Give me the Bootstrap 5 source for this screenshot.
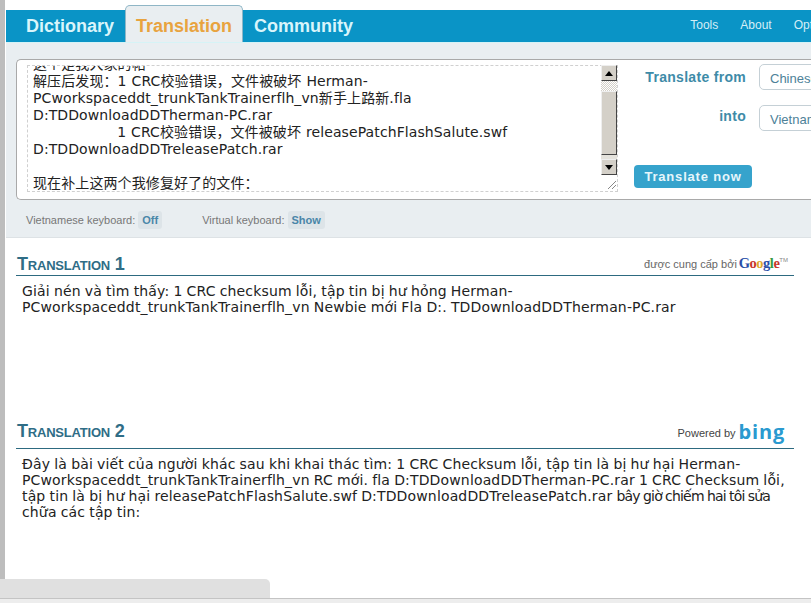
<!DOCTYPE html>
<html lang="en">
<head>
  <meta charset="UTF-8" />
  <meta name="viewport" content="width=device-width, initial-scale=1.0"/>
  <title>Translation</title>
  <link href="https://cdn.jsdelivr.net/npm/bootstrap@5.3.0/dist/css/bootstrap.min.css" rel="stylesheet"/>
  <style>
    html, body { height: 603px; overflow: hidden; }
    body { background: #fff; font-family: "Liberation Sans", Arial, sans-serif; width: 811px; }
    .shell { height: 579px; border-left: 5px solid #bdbdbd; padding: 10px 0 0 1px; width: 811px; }
    .topbar { height: 32px; background: #0a94c6; padding-left: 20px; }
    .tab-link { font-size: 18px; font-weight: 700; color: #d9f5fb; text-decoration: none; line-height: 31px; }
    .tab-first { margin-right: 11px; }
    .tab-active { height: 37px; width: 118px; margin-right: 11px; background: #e9eef1; color: #e8a33f; border: 1px solid #8fb6c6; border-bottom: 0; border-radius: 5px 5px 0 0; text-align: center; line-height: 41px; }
    .side-link { font-size: 12px; color: #d5eef6; text-decoration: none; margin-left: 22px; line-height: 34px; }
    .side-links { margin-right: -24px; }
    .tool-area { height: 196px; background: #e9eef1; border-top: 1px solid #d5f3f6; border-bottom: 1px solid #dde2e5; padding: 16px 0 0 10px; overflow: hidden; }
    .input-panel { height: 141px; width: 820px; background: #fff; border: 1px solid #a9a9a9; border-right: 0; border-radius: 5px 0 0 5px; padding: 5px 0 0 10px; }
    .text-box { width: 591px; height: 127px; border: 1px dashed #d0d0d0; flex: none; }
    .text-scroll { width: 574px; padding-left: 5px; overflow: hidden; font: 14px/17px "DejaVu Sans", Verdana, "Noto Sans CJK SC", sans-serif; letter-spacing: .1px; word-spacing: .4px; color: #222; }
    .text-inner { margin-top: -10px; white-space: pre-wrap; }
    .fake-scroll { width: 16px; flex: none; margin-top: -1px; }
    .sb-btn { height: 16px; background: #d4d0c8; border: 1px solid; border-color: #eee #444 #444 #eee; display: flex; align-items: center; justify-content: center; }
    .sb-track { height: 10px; background: repeating-conic-gradient(#d4d0c8 0 25%, #fff 0 50%) 0 0 / 2px 2px; }
    .sb-thumb { height: 64px; background: #d4d0c8; border: 1px solid; border-color: #eee #444 #444 #eee; }
    .sb-track-low { height: 4px; background: #e4e2dc; }
    .sb-grip { height: 15px; position: relative; }
    .sb-grip svg { position: absolute; right: 0; bottom: 0; }
    .lang-col { margin: -1px 0 0 15px; width: 200px; flex: none; }
    .lang-row { height: 26px; }
    .lang-gap { margin-top: 15px; }
    .lang-label { width: 113px; flex: none; white-space: nowrap; text-align: right; font-size: 14px; font-weight: 700; color: #3e8ba8; letter-spacing: .3px; }
    .lang-label-up { padding-bottom: 4px; }
    .lang-pick { width: 90px; height: 26px; margin-left: 13px; border: 1px solid #c5d0d6; border-radius: 5px 0 0 5px; font-size: 13px; color: #4d8198; padding: 4px 0 0 10px; white-space: nowrap; overflow: hidden; flex: none; background: #fff; }
    .go-btn { display: block; width: 118px; height: 23px; background: #36a3cc; color: #e6f6fb; font-size: 13px; font-weight: 700; letter-spacing: .8px; border: 0; border-radius: 4px; padding: 0; margin: 34px 0 0 1px; }
    .kbd-row { margin: 11px 0 0 10px; font-size: 11px; color: #777; }
    .kbd-pill { background: #dde4e8; color: #4a86a8; font-weight: 700; border-radius: 3px; padding: 2px 4px; margin-left: 3px; line-height: 14px; }
    .kbd-gap { margin-left: 40px; }
    .result-block { width: 778px; margin-left: 10px; }
    .result-head { height: 21px; border-bottom: 1px solid #2d6a80; padding: 0 0 2px 1px; }
    .result-head-tall { height: 28px; padding-bottom: 0; }
    .result-title { font-size: 18px; line-height: 20px; font-weight: 700; font-variant: small-caps; color: #2f6d86; margin: 0; letter-spacing: -.2px; }
    .credit { font-size: 11px; color: #666; white-space: nowrap; padding-right: 6px; }
    .credit-dark { color: #444; padding-right: 9px; margin-top: 3px; }
    .logo-google { font: 700 14.5px/14px "Liberation Serif", serif; letter-spacing: -.5px; margin-left: 2px; }
    .logo-tm { font-size: 6px; color: #888; vertical-align: 6px; }
    .logo-bing { display: inline-block; font: 700 20px/16px "Open Sans", sans-serif; letter-spacing: .8px; color: #2a9ad0; margin-left: 3px; vertical-align: -2px; }
    .result-text { margin: 0; padding: 7px 0 0 6px; font: 14px/16px "DejaVu Sans", Verdana, sans-serif; letter-spacing: .15px; word-spacing: -.5px; color: #222; width: 776px; }
    .tight-run { letter-spacing: -.8px; }
    .first-result { margin-top: 17px; height: 166px; }
    .foot-tab { width: 270px; height: 19px; background: #e0e0e0; border-radius: 0 5px 0 0; }
    .foot-line { height: 5px; background: #ededed; border-top: 1px solid #c4c4c4; }
  </style>
</head>
<body>
  <div class="shell">
    <!-- Top tabs -->
    <div class="topbar d-flex align-items-end justify-content-between">
      <div class="d-flex align-items-end">
        <a class="tab-link tab-first" href="#">Dictionary</a>
        <a class="tab-link tab-active" href="#">Translation</a>
        <a class="tab-link" href="#">Community</a>
      </div>
      <div class="side-links d-flex flex-nowrap">
        <a class="side-link" href="#">Tools</a>
        <a class="side-link" href="#">About</a>
        <a class="side-link" href="#">Options</a>
      </div>
    </div>

    <!-- Input -->
    <div class="tool-area">
      <div class="input-panel d-flex">
        <div class="text-box d-flex justify-content-between">
          <div class="text-scroll">
            <div class="text-inner">这个是我大家的帖
解压后发现：1 CRC校验错误，文件被破坏 Herman-PCworkspaceddt_trunkTankTrainerflh_vn新手上路新.fla D:TDDownloadDDTherman-PC.rar
                 1 CRC校验错误，文件被破坏 releasePatchFlashSalute.swf D:TDDownloadDDTreleasePatch.rar

现在补上这两个我修复好了的文件：</div>
          </div>
          <div class="fake-scroll">
            <div class="sb-btn"><svg width="8" height="5" viewBox="0 0 8 5"><path d="M4 0 8 5H0z" fill="#000"/></svg></div>
            <div class="sb-track"></div>
            <div class="sb-thumb"></div>
            <div class="sb-track-low"></div>
            <div class="sb-btn"><svg width="8" height="5" viewBox="0 0 8 5"><path d="M0 0h8L4 5z" fill="#000"/></svg></div>
            <div class="sb-grip"><svg width="10" height="10" viewBox="0 0 10 10"><path d="M1 9 9 1M5 9 9 5" stroke="#888" fill="none"/></svg></div>
          </div>
        </div>
        <div class="lang-col">
          <div class="lang-row d-flex align-items-center"><span class="lang-label">Translate from</span><span class="lang-pick">Chinese</span></div>
          <div class="lang-row lang-gap d-flex align-items-center"><span class="lang-label lang-label-up">into</span><span class="lang-pick">Vietnamese</span></div>
          <button class="go-btn" type="button">Translate now</button>
        </div>
      </div>
      <div class="kbd-row d-flex align-items-center">
        <span>Vietnamese keyboard:</span><span class="kbd-pill">Off</span>
        <span class="kbd-gap">Virtual keyboard:</span><span class="kbd-pill">Show</span>
      </div>
    </div>

    <!-- Results -->
    <div class="result-block first-result">
      <div class="result-head d-flex justify-content-between align-items-center">
        <h2 class="result-title">Translation 1</h2>
        <span class="credit">được cung cấp bởi<span class="logo-google"><span style="color:#2a4fa8">G</span><span style="color:#c8352b">o</span><span style="color:#e0a92b">o</span><span style="color:#2a4fa8">g</span><span style="color:#3a9a3f">l</span><span style="color:#c8352b">e</span></span><span class="logo-tm">TM</span></span>
      </div>
      <p class="result-text">Giải nén và tìm thấy: 1 CRC checksum lỗi, tập tin bị hư hỏng Herman-PCworkspaceddt_trunkTankTrainerflh_vn Newbie mới Fla D:. TDDownloadDDTherman-PC.rar</p>
    </div>
    <div class="result-block">
      <div class="result-head result-head-tall d-flex justify-content-between align-items-start">
        <h2 class="result-title">Translation 2</h2>
        <span class="credit credit-dark">Powered by<span class="logo-bing">bing</span></span>
      </div>
      <p class="result-text">Đây là bài viết của người khác sau khi khai thác tìm: 1 CRC Checksum lỗi, tập tin là bị hư hại Herman-PCworkspaceddt_trunkTankTrainerflh_vn RC mới. fla D:TDDownloadDDTherman-PC.rar 1 CRC Checksum lỗi, tập tin là bị hư hại releasePatchFlashSalute.swf D:TDDownloadDDTreleasePatch.rar <span class="tight-run">bây giờ chiếm hai tôi sửa</span> chữa các tập tin:</p>
    </div>
  </div>
  <div class="foot-tab"></div>
  <div class="foot-line"></div>
  <script src="https://cdn.jsdelivr.net/npm/bootstrap@5.3.0/dist/js/bootstrap.bundle.min.js"></script>
</body>
</html>
